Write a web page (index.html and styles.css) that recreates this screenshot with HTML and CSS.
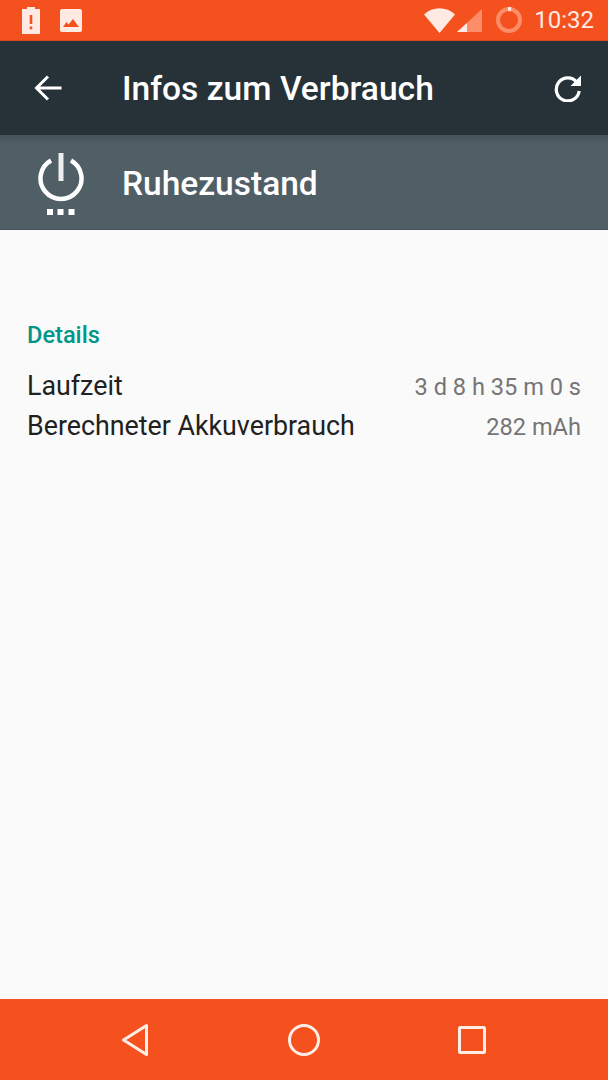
FILE: index.html
```html
<!DOCTYPE html>
<html lang="de">
<head>
    <meta charset="UTF-8">
    <meta name="viewport" content="width=device-width, initial-scale=1.0">
    <title>Infos zum Verbrauch</title>
    <link rel="stylesheet" href="styles.css">
</head>
<body>
    <div class="screen">
        <div class="status-bar">
            <div class="status-left">
                <svg class="icon-battery" width="18" height="27" viewBox="0 0 18 27">
                    <path fill="#ffeae3" d="M5 0h8v2h5v25H0V2h5z"/>
                    <path fill="#f4511e" d="M7.700 8h2.600v9H7.700zM7.700 19.500h2.600v2.700H7.700z"/>
                </svg>
                <svg class="icon-picture" width="22" height="23" viewBox="0 0 22 23">
                    <rect width="22" height="23" rx="2" fill="#ffeae3"/>
                    <path fill="#f4511e" d="M3 18l3.500-5 2 2.500L13 10l6 8z"/>
                </svg>
            </div>
            <div class="status-right">
                <svg class="icon-wifi" width="31" height="25" viewBox="0 0 31 25">
                    <path fill="#ffeae3" d="M0 6.500C8.500-2 22.500-2 31 6.500L15.500 25z"/>
                </svg>
                <svg class="icon-signal" width="25" height="23" viewBox="0 0 25 23">
                    <path fill="#fd8c69" d="M25 0v23H0z"/>
                    <path fill="#ffeae3" d="M10 14v9H0z"/>
                </svg>
                <svg class="icon-ring" width="26" height="26" viewBox="0 0 26 26">
                    <circle cx="13" cy="13" r="11" fill="none" stroke="#fd8c69" stroke-width="4"/>
                    <path d="M12 2a11 11 0 0 1 3 .2" fill="none" stroke="#ffeae3" stroke-width="4"/>
                </svg>
                <span class="clock">10:32</span>
            </div>
        </div>

        <div class="toolbar">
            <div class="icon-col">
                <svg width="28" height="28" viewBox="0 0 28 28">
                    <path fill="none" stroke="#fff" stroke-width="3" d="M27.500 14H3M14 2.500L2.500 14 14 25.500"/>
                </svg>
            </div>
            <h1 class="toolbar-title">Infos zum Verbrauch</h1>
            <svg class="icon-refresh" width="28" height="28" viewBox="0 0 28 28">
                <path fill="none" stroke="#fff" stroke-width="3.200" d="M23 8.500A11.500 11.500 0 1 0 25.200 17"/>
                <path fill="#fff" d="M27 1.500V12H16.500z"/>
            </svg>
        </div>

        <div class="header-row">
            <div class="icon-col">
                <svg width="46" height="62" viewBox="0 0 46 62">
                    <path fill="none" stroke="#fff" stroke-width="4.500" d="M13 7.500A20.500 20.500 0 1 0 33 7.500"/>
                    <path fill="none" stroke="#eceeef" stroke-width="5" d="M23 0V28"/>
                    <path fill="#fff" d="M9 56h6v6H9zM19.500 56h6v6h-6zM30.500 56h6v6h-6z"/>
                </svg>
            </div>
            <div class="header-title">Ruhezustand</div>
        </div>

        <div class="content">
            <h2 class="section-title">Details</h2>
            <div class="detail-row">
                <span class="detail-label">Laufzeit</span>
                <span class="detail-value">3 d 8 h 35 m 0 s</span>
            </div>
            <div class="detail-row">
                <span class="detail-label">Berechneter Akkuverbrauch</span>
                <span class="detail-value">282 mAh</span>
            </div>
        </div>

        <div class="nav-bar">
            <svg class="nav-back" width="26" height="32" viewBox="0 0 26 32">
                <path fill="none" stroke="#fdeee8" stroke-width="3" stroke-linejoin="round" d="M24.500 1.500L1.500 16l23 14.500z"/>
            </svg>
            <svg class="nav-home" width="32" height="32" viewBox="0 0 32 32">
                <circle cx="16" cy="16" r="14.500" fill="none" stroke="#fdeee8" stroke-width="3"/>
            </svg>
            <svg width="28" height="28" viewBox="0 0 28 28">
                <rect x="1.500" y="1.500" width="25" height="25" rx="1" fill="none" stroke="#fdeee8" stroke-width="3"/>
            </svg>
        </div>
    </div>
</body>
</html>
```

FILE: styles.css
```css
* {
    box-sizing: border-box;
}

body {
    margin: 0;
    font-family: 'Roboto', 'Liberation Sans', sans-serif;
    background: #fafafa;
}

.screen {
    display: flex;
    flex-direction: column;
    height: 1080px;
}

.status-bar {
    height: 41px;
    flex: none;
    display: flex;
    justify-content: space-between;
    align-items: center;
    padding: 0 14px 0 22px;
    background: #f4511e;
    border-bottom: 1px solid #dc4a1c;
}

.status-left,
.status-right {
    display: flex;
    align-items: center;
}

.status-left {
    gap: 20px;
}

.icon-wifi {
    margin-right: 2px;
}

.icon-signal {
    margin-right: 14px;
}

.icon-ring {
    margin-right: 12px;
}

.clock {
    font-size: 24px;
    color: #ffeae3;
}

.toolbar {
    height: 94px;
    flex: none;
    display: flex;
    align-items: center;
    padding-right: 26px;
    background: #263238;
}

.icon-col {
    width: 122px;
    flex: none;
    display: flex;
    padding-left: 34px;
}

.toolbar-title {
    flex: 1;
    margin: 0;
    font-size: 33.600px;
    font-weight: 500;
    color: #fff;
}

.header-row {
    height: 95px;
    flex: none;
    display: flex;
    align-items: center;
    background: linear-gradient(#445259, #505e65 10%);
    border-bottom: 1px solid #47555c;
}

.header-row .icon-col {
    padding-left: 38px;
    padding-top: 4px;
}

.header-title {
    margin-top: 2px;
    font-size: 33.500px;
    font-weight: 500;
    color: #fff;
}

.content {
    flex: 1;
    padding: 92px 27px 0 27px;
}

.section-title {
    margin: 0 0 17px;
    font-size: 23.600px;
    line-height: 27px;
    font-weight: 500;
    color: #009688;
}

.detail-row {
    display: flex;
    justify-content: space-between;
    align-items: baseline;
    height: 40px;
    line-height: 40px;
}

.detail-label {
    font-size: 26.800px;
    color: #212121;
}

.detail-value {
    font-size: 23.600px;
    color: #757575;
}

.nav-bar {
    height: 81px;
    flex: none;
    display: flex;
    align-items: center;
    padding-left: 122px;
    background: #f4511e;
}

.nav-back {
    margin-right: 140px;
}

.nav-home {
    margin-right: 138px;
}
```
